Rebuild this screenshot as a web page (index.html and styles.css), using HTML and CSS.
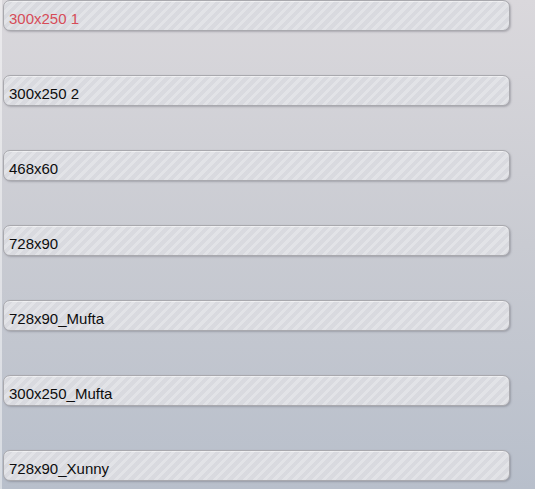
FILE: index.html
```html
<!DOCTYPE html>
<html>
<head>
<meta charset="utf-8">
<link rel="stylesheet" href="styles.css">
</head>
<body>
<div class="page">
  <div class="list">
    <div class="bar active">300x250 1</div>
    <div class="bar">300x250 2</div>
    <div class="bar">468x60</div>
    <div class="bar">728x90</div>
    <div class="bar">728x90_Mufta</div>
    <div class="bar">300x250_Mufta</div>
    <div class="bar">728x90_Xunny</div>
  </div>
</div>
</body>
</html>
```
FILE: styles.css
```css
html, body {
  margin: 0;
  padding: 0;
  height: 100%;
}
body {
  background: linear-gradient(to bottom, #dad8dc 0%, #c9cbd2 50%, #b8bfcb 100%);
  font-family: "Liberation Sans", Arial, sans-serif;
  overflow: hidden;
}
.page {
  min-height: 489px;
  border-left: 2px solid rgba(255, 255, 255, 0.45);
  padding-left: 1px;
}
.list {
  display: flex;
  flex-direction: column;
  gap: 44px;
  width: 507px;
}
.bar {
  box-sizing: border-box;
  height: 31px;
  padding: 9px 0 0 5px;
  font-size: 15px;
  line-height: 17px;
  color: #0d0d0d;
  border: 1px solid #a9a9ae;
  border-radius: 7px;
  background-color: #dcdde2;
  background-image: repeating-linear-gradient(135deg, rgba(255,255,255,0.18) 0px, rgba(255,255,255,0.18) 3px, rgba(180,180,190,0.08) 3px, rgba(180,180,190,0.08) 7px);
  box-shadow: 1px 1px 2px rgba(90, 90, 100, 0.35), inset 0 1px 0 rgba(255,255,255,0.5);
}
.bar.active {
  color: #d64c58;
}
```
